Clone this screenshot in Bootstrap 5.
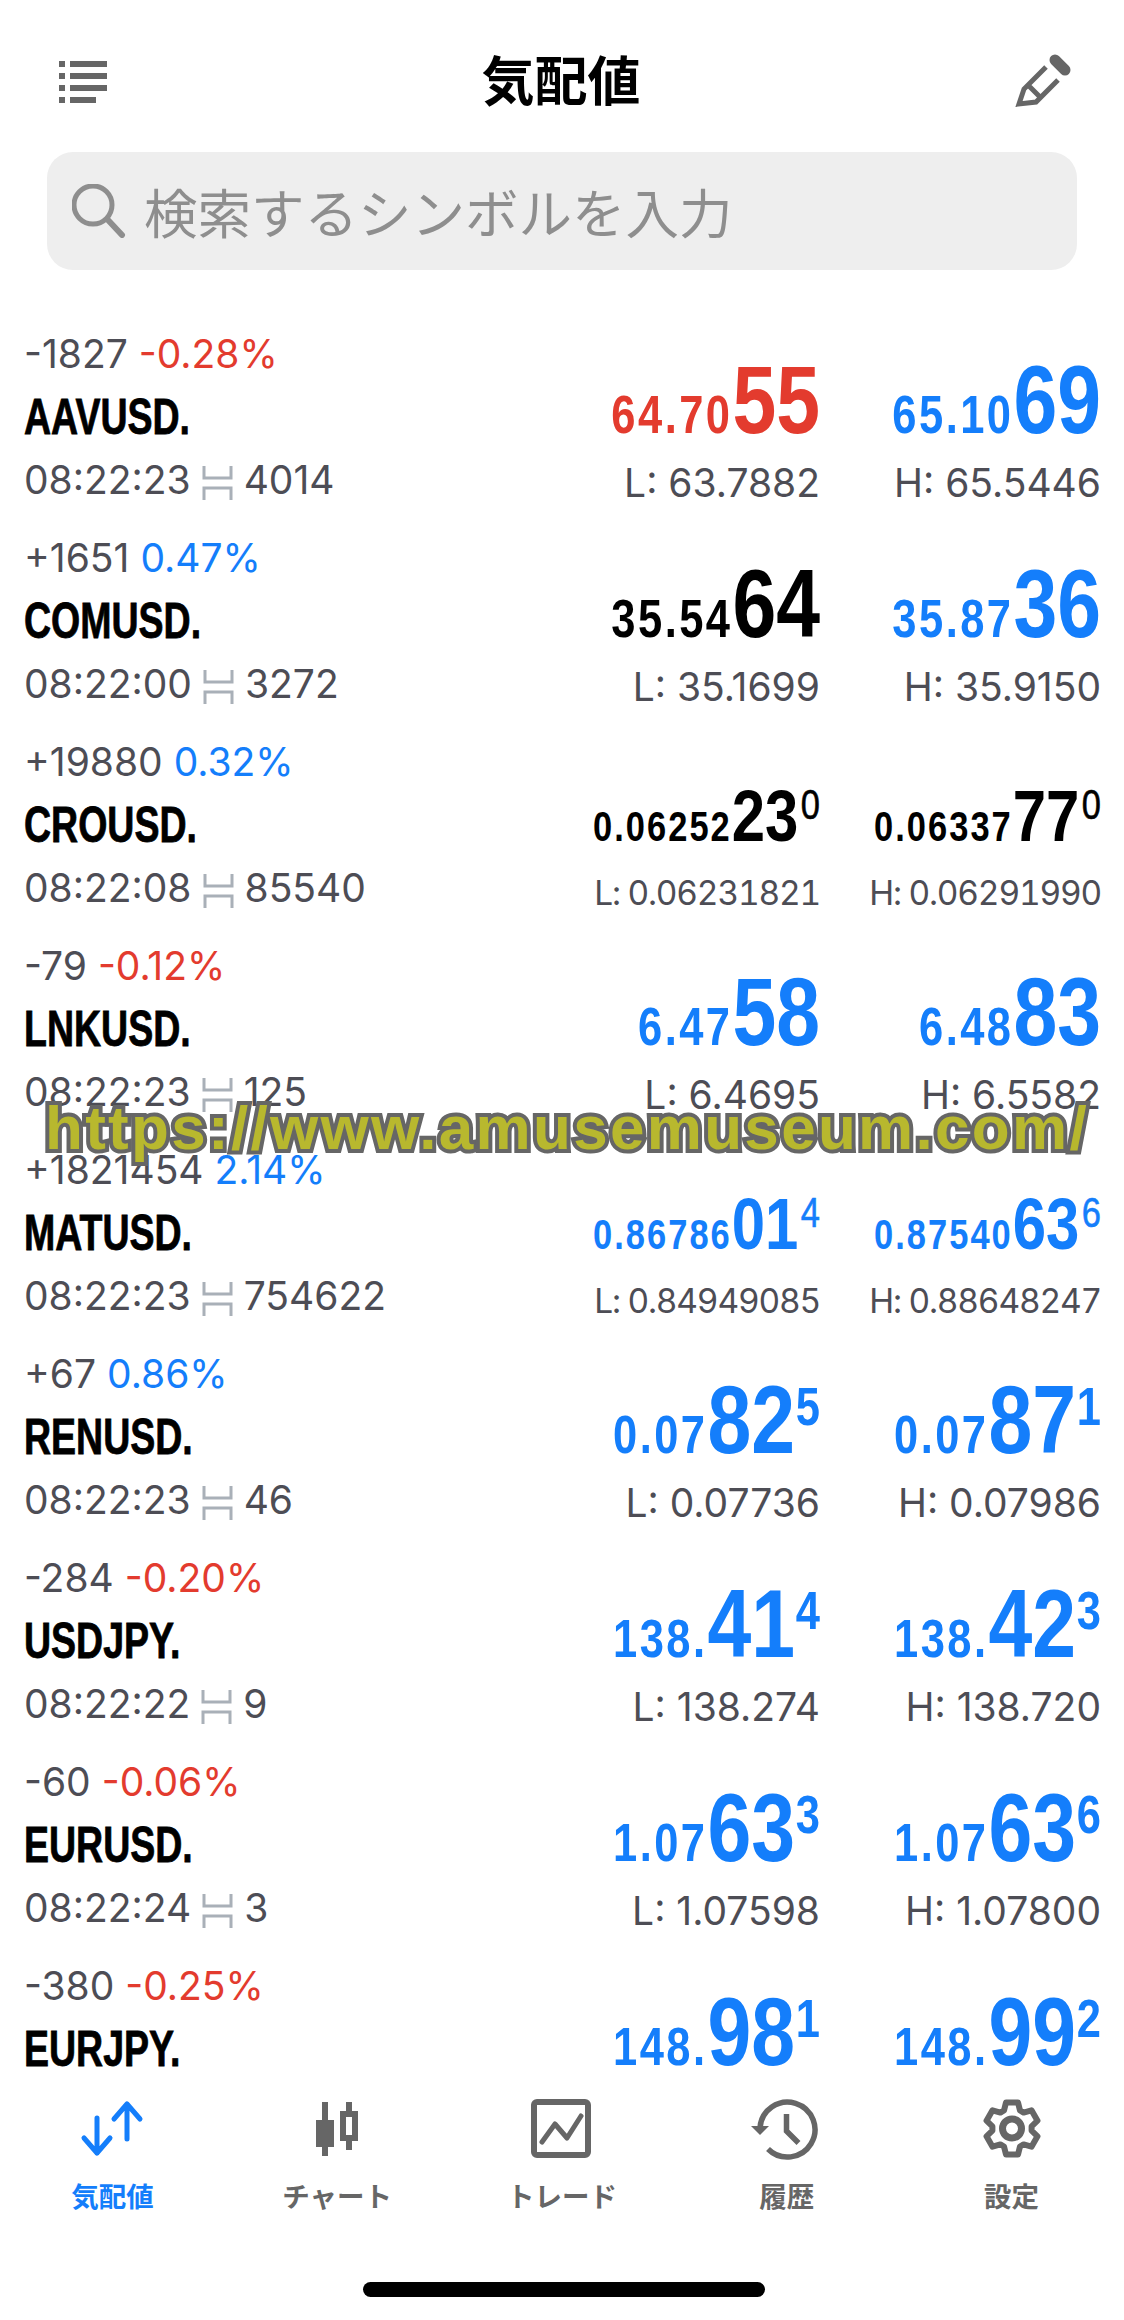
<!DOCTYPE html>
<html lang="ja">
<head>
    <meta charset="UTF-8">
    <meta name="viewport" content="width=device-width, initial-scale=1.0">
    <title>気配値</title>
    <link href="https://cdn.jsdelivr.net/npm/bootstrap@5.3.0/dist/css/bootstrap.min.css" rel="stylesheet">
    <style>
        html, body { height: 2320px; overflow: hidden; background: #fff; }
        body { font-family: Inter, "Noto Sans CJK JP", sans-serif; color: #4d4d55; }
        .screen { width: 1124px; height: 2320px; overflow: hidden; }
        .top-bar { height: 152px; padding: 8px 34px 0 59px; }
        .menu-ico { margin-top: 4px; }
        .top-title { font-family: "Noto Sans CJK JP", sans-serif; font-weight: 700; font-size: 53px; line-height: 1; color: #000; margin: -4px 0 0 15px; }
        .search-box { height: 118px; margin: 0 47px 0 47px; padding: 0 0 0 25px; background: #eee; border-radius: 26px; gap: 18px; }
        .search-text { font-family: "Noto Sans CJK JP", sans-serif; font-size: 53.5px; line-height: 1; color: #8e8e8e; }
        .quote-list { height: 1805px; padding: 52px 23px 0 24px; overflow: hidden; }
        .quote-row { height: 204px; flex: none; }
        .chg-line, .time-line { font-size: 39px; line-height: 64px; height: 64px; white-space: nowrap; }
        .sym { font-family: "Liberation Sans", sans-serif; font-weight: 700; font-size: 50px; line-height: 62px; height: 62px; color: #000; transform: scaleX(.75); transform-origin: 0 50%; -webkit-text-stroke: .8px #000; }
        .tick-ico { width: 31px; height: 34px; margin: 0 11px 0 11px; vertical-align: -6px; }
        .quote-col { width: 281px; text-align: right; }
        .quote-col.first { width: 300px; }
        .px { font-family: "Liberation Sans", sans-serif; font-weight: 700; font-size: 40px; height: 136px; line-height: 194px; white-space: nowrap; margin-left: -120px; transform: scaleX(.82); transform-origin: 100% 50%; }
        .px-sm, .px-lg, .px-sup { line-height: 0; }
        .px-sm { font-size: 53px; letter-spacing: 3px; }
        .px-lg { font-size: 96px; }
        .px-sup { font-size: 53px; vertical-align: 28px; margin-left: 1px; }
        .lim { font-size: 39px; line-height: 50px; white-space: nowrap; }
        .long .px-sm { font-size: 42px; letter-spacing: 2.5px; }
        .long .px-lg { font-size: 73px; }
        .long .px-sup { font-size: 42px; font-weight: 400; vertical-align: 22px; margin-left: 3px; -webkit-text-stroke: .6px currentColor; }
        .long .lim { font-size: 33.5px; letter-spacing: -1.2px; font-variant-numeric: tabular-nums; margin-top: 2px; }
        .c-up { color: #147efb; }
        .c-down { color: #e33b2e; }
        .c-flat { color: #000; }
        .tab-bar { height: 245px; background: #fff; padding-top: 23px; position: relative; }
        .tab-item { width: 225px; color: #666; font-family: "Noto Sans CJK JP", sans-serif; font-weight: 700; font-size: 27.5px; line-height: 1; }
        .tab-item.active { color: #147efb; }
        .tab-ico { width: 90px; height: 62px; margin-bottom: 22px; }
        .home-bar { width: 402px; height: 15px; background: #000; border-radius: 8px; position: absolute; left: 363px; top: 207px; }
        .water-mark { position: absolute; left: 45px; top: 1096px; font-family: "Liberation Sans", sans-serif; font-weight: 700; font-size: 62px; letter-spacing: 2.3px; line-height: 64px; color: #b8b82e; -webkit-text-stroke: 8px #666; paint-order: stroke fill; white-space: nowrap; }
    </style>
</head>
<body>
<div class="screen position-relative">
    <div class="top-bar d-flex justify-content-between align-items-center">
        <svg class="menu-ico" width="48" height="42" viewBox="0 0 48 42" fill="#666"><rect y="0" width="6" height="6"/><rect x="11" y="0" width="37" height="6"/><rect y="12" width="6" height="6"/><rect x="11" y="12" width="37" height="6"/><rect y="24" width="6" height="6"/><rect x="11" y="24" width="37" height="6"/><rect y="36" width="6" height="6"/><rect x="11" y="36" width="26" height="6"/></svg>
        <div class="top-title">気配値</div>
        <svg width="90" height="80" viewBox="0 0 90 80" fill="none" stroke="#666" stroke-width="5"><path d="M46 27L24 49l-5 15 17-2 22-22M28 45l13 13"/><path d="M55 20l10 10" stroke-width="11" stroke-linecap="round"/></svg>
    </div>
    <div class="search-box d-flex align-items-center">
        <svg width="54" height="54" viewBox="0 0 54 54" fill="none" stroke="#8e8e8e" stroke-width="5"><circle cx="21" cy="21" r="19"/><path d="M36 36l14 15" stroke-width="6" stroke-linecap="round"/></svg>
        <div class="search-text">検索するシンボルを入力</div>
    </div>
    <div class="quote-list">
        <div class="quote-row d-flex justify-content-between">
            <div><div class="chg-line">-1827 <span class="c-down">-0.28%</span></div><div class="sym">AAVUSD.</div><div class="time-line">08:22:23<svg class="tick-ico" viewBox="0 0 31 34" fill="none" stroke="#a9b0b8" stroke-width="3"><path d="M2 0v12h27V0M2 34V22h27v12"/></svg>4014</div></div>
            <div class="d-flex">
                <div class="quote-col first"><div class="px c-down"><span class="px-sm">64.70</span><span class="px-lg">55</span></div><div class="lim">L: 63.7882</div></div>
                <div class="quote-col"><div class="px c-up"><span class="px-sm">65.10</span><span class="px-lg">69</span></div><div class="lim">H: 65.5446</div></div>
            </div>
        </div>
        <div class="quote-row d-flex justify-content-between">
            <div><div class="chg-line">+1651 <span class="c-up">0.47%</span></div><div class="sym">COMUSD.</div><div class="time-line">08:22:00<svg class="tick-ico" viewBox="0 0 31 34" fill="none" stroke="#a9b0b8" stroke-width="3"><path d="M2 0v12h27V0M2 34V22h27v12"/></svg>3272</div></div>
            <div class="d-flex">
                <div class="quote-col first"><div class="px c-flat"><span class="px-sm">35.54</span><span class="px-lg">64</span></div><div class="lim">L: 35.1699</div></div>
                <div class="quote-col"><div class="px c-up"><span class="px-sm">35.87</span><span class="px-lg">36</span></div><div class="lim">H: 35.9150</div></div>
            </div>
        </div>
        <div class="quote-row d-flex justify-content-between">
            <div><div class="chg-line">+19880 <span class="c-up">0.32%</span></div><div class="sym">CROUSD.</div><div class="time-line">08:22:08<svg class="tick-ico" viewBox="0 0 31 34" fill="none" stroke="#a9b0b8" stroke-width="3"><path d="M2 0v12h27V0M2 34V22h27v12"/></svg>85540</div></div>
            <div class="d-flex long">
                <div class="quote-col first"><div class="px c-flat"><span class="px-sm">0.06252</span><span class="px-lg">23</span><span class="px-sup">0</span></div><div class="lim">L: 0.06231821</div></div>
                <div class="quote-col"><div class="px c-flat"><span class="px-sm">0.06337</span><span class="px-lg">77</span><span class="px-sup">0</span></div><div class="lim">H: 0.06291990</div></div>
            </div>
        </div>
        <div class="quote-row d-flex justify-content-between">
            <div><div class="chg-line">-79 <span class="c-down">-0.12%</span></div><div class="sym">LNKUSD.</div><div class="time-line">08:22:23<svg class="tick-ico" viewBox="0 0 31 34" fill="none" stroke="#a9b0b8" stroke-width="3"><path d="M2 0v12h27V0M2 34V22h27v12"/></svg>125</div></div>
            <div class="d-flex">
                <div class="quote-col first"><div class="px c-up"><span class="px-sm">6.47</span><span class="px-lg">58</span></div><div class="lim">L: 6.4695</div></div>
                <div class="quote-col"><div class="px c-up"><span class="px-sm">6.48</span><span class="px-lg">83</span></div><div class="lim">H: 6.5582</div></div>
            </div>
        </div>
        <div class="quote-row d-flex justify-content-between">
            <div><div class="chg-line">+1821454 <span class="c-up">2.14%</span></div><div class="sym">MATUSD.</div><div class="time-line">08:22:23<svg class="tick-ico" viewBox="0 0 31 34" fill="none" stroke="#a9b0b8" stroke-width="3"><path d="M2 0v12h27V0M2 34V22h27v12"/></svg>754622</div></div>
            <div class="d-flex long">
                <div class="quote-col first"><div class="px c-up"><span class="px-sm">0.86786</span><span class="px-lg">01</span><span class="px-sup">4</span></div><div class="lim">L: 0.84949085</div></div>
                <div class="quote-col"><div class="px c-up"><span class="px-sm">0.87540</span><span class="px-lg">63</span><span class="px-sup">6</span></div><div class="lim">H: 0.88648247</div></div>
            </div>
        </div>
        <div class="quote-row d-flex justify-content-between">
            <div><div class="chg-line">+67 <span class="c-up">0.86%</span></div><div class="sym">RENUSD.</div><div class="time-line">08:22:23<svg class="tick-ico" viewBox="0 0 31 34" fill="none" stroke="#a9b0b8" stroke-width="3"><path d="M2 0v12h27V0M2 34V22h27v12"/></svg>46</div></div>
            <div class="d-flex">
                <div class="quote-col first"><div class="px c-up"><span class="px-sm">0.07</span><span class="px-lg">82</span><span class="px-sup">5</span></div><div class="lim">L: 0.07736</div></div>
                <div class="quote-col"><div class="px c-up"><span class="px-sm">0.07</span><span class="px-lg">87</span><span class="px-sup">1</span></div><div class="lim">H: 0.07986</div></div>
            </div>
        </div>
        <div class="quote-row d-flex justify-content-between">
            <div><div class="chg-line">-284 <span class="c-down">-0.20%</span></div><div class="sym">USDJPY.</div><div class="time-line">08:22:22<svg class="tick-ico" viewBox="0 0 31 34" fill="none" stroke="#a9b0b8" stroke-width="3"><path d="M2 0v12h27V0M2 34V22h27v12"/></svg>9</div></div>
            <div class="d-flex">
                <div class="quote-col first"><div class="px c-up"><span class="px-sm">138.</span><span class="px-lg">41</span><span class="px-sup">4</span></div><div class="lim">L: 138.274</div></div>
                <div class="quote-col"><div class="px c-up"><span class="px-sm">138.</span><span class="px-lg">42</span><span class="px-sup">3</span></div><div class="lim">H: 138.720</div></div>
            </div>
        </div>
        <div class="quote-row d-flex justify-content-between">
            <div><div class="chg-line">-60 <span class="c-down">-0.06%</span></div><div class="sym">EURUSD.</div><div class="time-line">08:22:24<svg class="tick-ico" viewBox="0 0 31 34" fill="none" stroke="#a9b0b8" stroke-width="3"><path d="M2 0v12h27V0M2 34V22h27v12"/></svg>3</div></div>
            <div class="d-flex">
                <div class="quote-col first"><div class="px c-up"><span class="px-sm">1.07</span><span class="px-lg">63</span><span class="px-sup">3</span></div><div class="lim">L: 1.07598</div></div>
                <div class="quote-col"><div class="px c-up"><span class="px-sm">1.07</span><span class="px-lg">63</span><span class="px-sup">6</span></div><div class="lim">H: 1.07800</div></div>
            </div>
        </div>
        <div class="quote-row d-flex justify-content-between">
            <div><div class="chg-line">-380 <span class="c-down">-0.25%</span></div><div class="sym">EURJPY.</div></div>
            <div class="d-flex">
                <div class="quote-col first"><div class="px c-up"><span class="px-sm">148.</span><span class="px-lg">98</span><span class="px-sup">1</span></div></div>
                <div class="quote-col"><div class="px c-up"><span class="px-sm">148.</span><span class="px-lg">99</span><span class="px-sup">2</span></div></div>
            </div>
        </div>
    </div>
    <div class="tab-bar d-flex">
        <div class="tab-item active d-flex flex-column align-items-center">
            <svg class="tab-ico" viewBox="0 0 90 62" fill="none" stroke="#147efb" stroke-width="5" stroke-linecap="round" stroke-linejoin="round"><path d="M47 21L60 6l13 15M60 6v35M17 40l13 15 13-15M30 55V20"/></svg>
            <div>気配値</div>
        </div>
        <div class="tab-item d-flex flex-column align-items-center">
            <svg class="tab-ico" viewBox="0 0 90 62" fill="#666"><path d="M30 4h6v18h6v27h-6v9h-6v-9h-6V22h6z"/><path fill-rule="evenodd" d="M54 4h6v9h6v30h-6v9h-6v-9h-6V13h6zM54 19v18h6V19z"/></svg>
            <div>チャート</div>
        </div>
        <div class="tab-item d-flex flex-column align-items-center">
            <svg class="tab-ico" viewBox="0 0 90 62" fill="none" stroke="#666" stroke-width="6"><rect x="17" y="4" width="54" height="53" rx="3"/><path d="M25 44l13-18 12 14 14-22" stroke-width="5" stroke-linecap="round" stroke-linejoin="round"/></svg>
            <div>トレード</div>
        </div>
        <div class="tab-item d-flex flex-column align-items-center">
            <svg class="tab-ico" viewBox="0 0 90 62" fill="none" stroke="#666" stroke-width="5.5"><path d="M18 30A27.5 27.5 0 1 1 26 51"/><path d="M44.5 16v17l12 12"/><path d="M9 28h18l-9 9z" fill="#666" stroke="none"/></svg>
            <div>履歴</div>
        </div>
        <div class="tab-item d-flex flex-column align-items-center">
            <svg class="tab-ico" viewBox="-45 -30.5 90 62" fill="none" stroke="#666" stroke-width="6" stroke-linejoin="round"><path d="M-6-26L6-26 8-18 11.6-15.9 19.5-18.2 25.5-7.8 19.6-2.1 19.6 2.1 25.5 7.8 19.5 18.2 11.6 15.9 8 18 6 26-6 26-8 18-11.6 15.9-19.5 18.2-25.5 7.8-19.6 2.1-19.6-2.1-25.5-7.8-19.5-18.2-11.6-15.9-8-18Z"/><circle r="9.5" stroke-width="7"/></svg>
            <div>設定</div>
        </div>
        <div class="home-bar"></div>
    </div>
    <div class="water-mark">https://www.amusemuseum.com/</div>
</div>
<script src="https://cdn.jsdelivr.net/npm/bootstrap@5.3.0/dist/js/bootstrap.bundle.min.js"></script>
</body>
</html>
